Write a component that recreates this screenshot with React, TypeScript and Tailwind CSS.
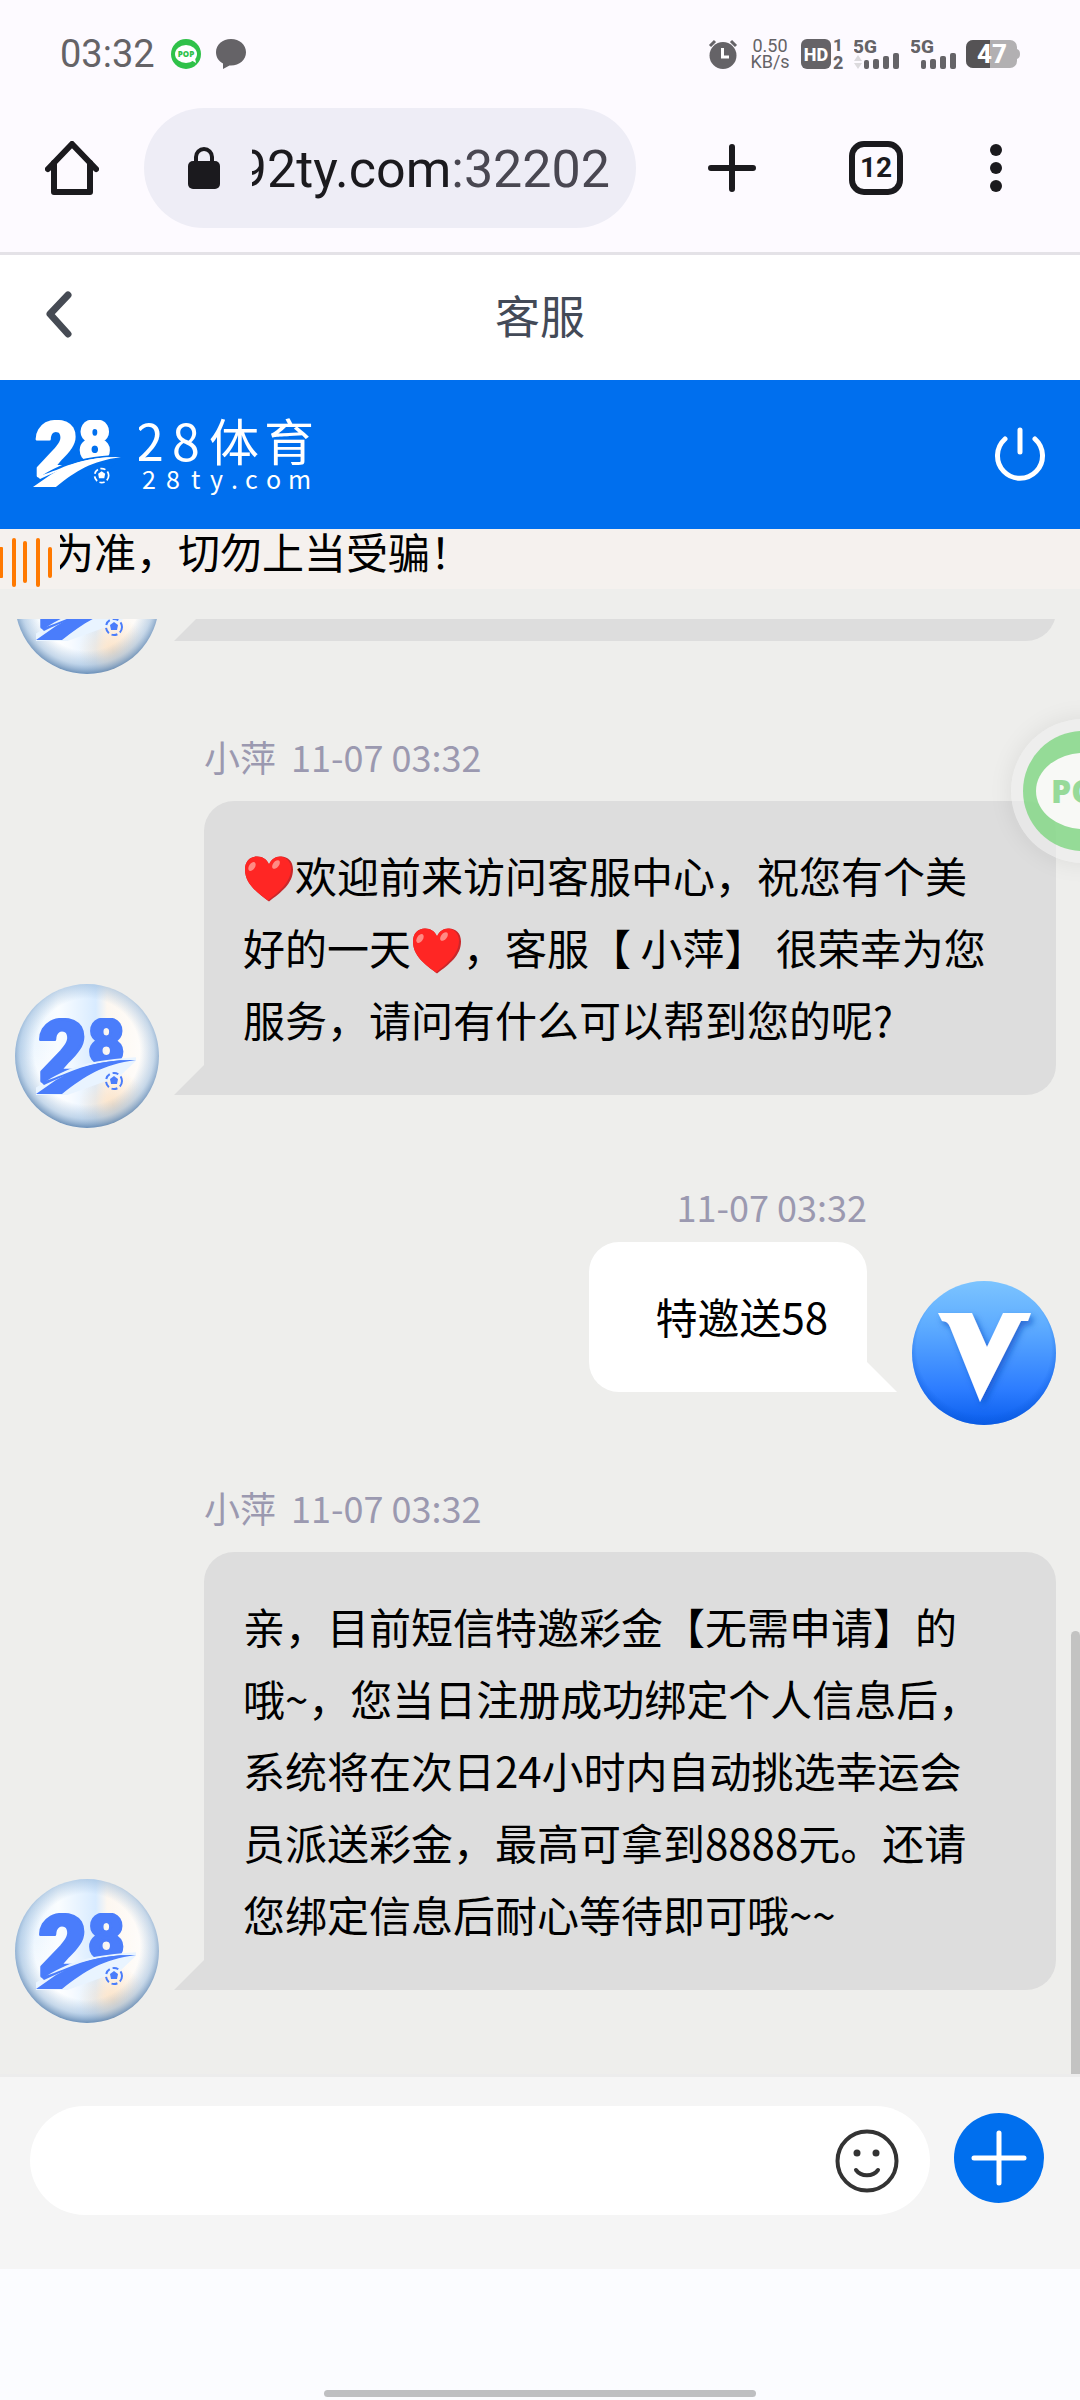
import React, { useId } from "react";

const CJK = "font-['Noto_Sans_CJK_SC',sans-serif]";

function PopIcon() {
  return (
    <svg className="size-[30px]" viewBox="0 0 30 30" aria-hidden="true">
      <circle cx="15" cy="15" r="15" fill="#2fc149" />
      <ellipse cx="15" cy="15" rx="11" ry="9" fill="#fff" />
      <path d="M20 21l5 3-1-5z" fill="#fff" />
      <text x="15" y="18" textAnchor="middle" fontSize="8" fontWeight="800" fontFamily="Open Sans, sans-serif" fill="#2fc149">
        POP
      </text>
    </svg>
  );
}

function Signal({ arrows = false }: { arrows?: boolean }) {
  return (
    <svg className="h-[30px] w-[45px]" viewBox="0 0 45 30" fill="#656367" aria-hidden="true">
      <text x="-1" y="14" fontSize="19" fontWeight="800" fontFamily="Roboto, sans-serif">
        5G
      </text>
      {arrows && (
        <g fill="#dcdadd">
          <path d="M0 22l4-6 4 6zM0 24l4 6 4-6z" />
        </g>
      )}
      <rect x="10" y="21" width="5" height="9" rx="2" />
      <rect x="19" y="20" width="6" height="10" rx="2" />
      <rect x="29" y="17" width="6" height="13" rx="2" />
      <rect x="39" y="14" width="6" height="16" rx="2" />
    </svg>
  );
}

function StatusBar() {
  return (
    <div className="flex h-[108px] items-center pr-[60px] pl-[60px] font-['Roboto',sans-serif] text-[#656367]">
      <span className="text-[38px] leading-10">03:32</span>
      <div className="ml-4 flex flex-1 gap-[15px]">
        <PopIcon />
        <svg className="size-[30px]" viewBox="0 0 30 30" fill="#656367" aria-hidden="true">
          <path d="M15 0C6.500 0 0 5.800 0 13.200c0 5 2.800 9 7 11.300V30l6.500-3.500H15c8.500 0 15-5.800 15-13.200S23.500 0 15 0z" />
        </svg>
      </div>
      <svg className="size-[30px]" viewBox="0 0 30 30" aria-hidden="true">
        <circle cx="15" cy="16.500" r="13.500" fill="#656367" />
        <path d="M2 7l5-5M28 7l-5-5" stroke="#656367" strokeWidth="3" />
        <path d="M14.500 9v9H21" stroke="#fff" strokeWidth="3" fill="none" />
      </svg>
      <div className="ml-3 w-10 text-center text-[18px] leading-4">
        0.50
        <br />
        KB/s
      </div>
      <svg className="ml-[11px] h-[30px] w-[43px]" viewBox="0 0 43 30" fill="#656367" aria-hidden="true">
        <rect width="30" height="30" rx="6" />
        <text x="15" y="22" textAnchor="middle" fontSize="18" fontWeight="800" fill="#fff" fontFamily="Roboto, sans-serif">
          HD
        </text>
        <text x="32" y="12" fontSize="17" fontWeight="800" fontFamily="Roboto, sans-serif">
          1
        </text>
        <text x="32" y="30" fontSize="18" fontWeight="800" fontFamily="Roboto, sans-serif">
          2
        </text>
      </svg>
      <div className="ml-[10px] flex gap-3">
        <Signal arrows />
        <Signal />
      </div>
      <svg className="ml-[10px] h-7 w-[54px]" viewBox="0 0 54 28" aria-hidden="true">
        <rect width="51" height="28" rx="7" fill="#b2b0b2" />
        <path d="M51 9c4 1 4 9 0 10z" fill="#b2b0b2" />
        <path d="M7 0h17v28H7a7 7 0 0 1-7-7V7a7 7 0 0 1 7-7z" fill="#555355" />
        <text x="26" y="23" textAnchor="middle" fontSize="26" fontWeight="800" fill="#fff" fontFamily="Roboto, sans-serif">
          47
        </text>
      </svg>
    </div>
  );
}

function BrowserBar() {
  return (
    <div className="flex h-36 items-start border-b-[3px] border-[#e4e2e7] pr-9 pl-[45px] font-['Roboto',sans-serif] text-[#1b1a1e] box-content">
      <button type="button" aria-label="主页" className="flex h-[120px] w-[54px] items-center">
        <svg className="size-[54px]" viewBox="0 0 54 54" fill="none" stroke="#1b1a1e" strokeWidth="6" strokeLinecap="round" strokeLinejoin="round" aria-hidden="true">
          <path d="M3 28L27 3l24 25" />
          <path d="M9 22v29h36V22" />
        </svg>
      </button>
      <div className="ml-[45px] flex h-[120px] min-w-0 flex-1 items-center rounded-full bg-[#eeedf6] pr-[26px] pl-11">
        <svg className="h-[42px] w-8 shrink-0" viewBox="0 0 32 42" aria-hidden="true">
          <rect y="14" width="32" height="28" rx="5" fill="#1b1a1e" />
          <path d="M8 16v-6a8 8 0 0 1 16 0v6" fill="none" stroke="#1b1a1e" strokeWidth="4" />
        </svg>
        <div className="ml-8 flex min-w-0 flex-1 justify-end overflow-hidden pt-1 text-[52px] leading-[64px] whitespace-nowrap">
          <span>92ty.com</span>
          <span className="text-[#494751]">:32202</span>
        </div>
      </div>
      <button type="button" aria-label="新标签页" className="ml-6 flex h-[120px] w-36 items-center justify-center">
        <svg className="size-12" viewBox="0 0 48 48" stroke="#1b1a1e" strokeWidth="6" strokeLinecap="round" aria-hidden="true">
          <path d="M24 3v42M3 24h42" />
        </svg>
      </button>
      <button type="button" aria-label="切换标签页" className="flex h-[120px] w-36 items-center justify-center">
        <span className="flex size-[54px] items-center justify-center rounded-[15px] border-[6px] border-[#1b1a1e] text-[28px] leading-none font-bold">12</span>
      </button>
      <button type="button" aria-label="更多" className="flex h-[120px] w-24 flex-col items-center justify-center gap-[6px]">
        <span className="size-3 rounded-full bg-[#1b1a1e]" />
        <span className="size-3 rounded-full bg-[#1b1a1e]" />
        <span className="size-3 rounded-full bg-[#1b1a1e]" />
      </button>
    </div>
  );
}

function Mark({ className, gap }: { className: string; gap: string }) {
  return (
    <svg className={className} viewBox="0 0 100 77" fill="currentColor" aria-hidden="true">
      <g stroke="currentColor" strokeWidth="3" strokeLinejoin="round" fontWeight="900" fontFamily="Roboto, sans-serif">
        <text x="2" y="63" fontSize="86">
          2
        </text>
        <text x="52" y="46" fontSize="63">
          8
        </text>
      </g>
      <path d="M-4 72C20 58 34 42 104 39L84 58 26 79H-4z" fill={gap} />
      <path d="M5 64C30 58 44 44 92 42 60 46 30 56 8 67z" />
      <path d="M0 76L20 62C42 49 68 41 100 42 66 47 50 57 26 76z" />
      <circle cx="78" cy="63" r="8" fill="none" stroke="currentColor" strokeWidth="2" strokeDasharray="6 3" />
      <path d="M78 58l4 3-1 5h-6l-1-5z" />
    </svg>
  );
}

function AgentAvatar() {
  const id = useId();
  return (
    <div className="relative size-36 shrink-0">
      <svg className="size-36" viewBox="0 0 144 144" role="img" aria-label="客服头像">
        <defs>
          <linearGradient id={id + "b"} x1="0" x2="1">
            <stop offset="0" stopColor="#e3f1fe" />
            <stop offset=".3" stopColor="#fafdff" />
            <stop offset=".56" stopColor="#d8ebff" />
            <stop offset=".64" stopColor="#fdf7f0" />
            <stop offset="1" stopColor="#fff" />
          </linearGradient>
          <radialGradient id={id + "p"} cx=".68" cy=".84" r=".24">
            <stop offset="0" stopColor="#fbe3c8" />
            <stop offset="1" stopColor="#fbe3c8" stopOpacity="0" />
          </radialGradient>
          <radialGradient id={id + "w"} cx=".2" cy=".82" r=".4">
            <stop offset="0" stopColor="#fff" />
            <stop offset="1" stopColor="#fff" stopOpacity="0" />
          </radialGradient>
          <radialGradient id={id + "e"} cx=".5" cy=".47" r=".54">
            <stop offset=".68" stopColor="#8fb2d6" stopOpacity="0" />
            <stop offset=".86" stopColor="#8fb2d6" stopOpacity=".5" />
            <stop offset="1" stopColor="#557daa" stopOpacity=".95" />
          </radialGradient>
        </defs>
        <circle cx="72" cy="72" r="72" fill={`url(#${id}b)`} />
        <circle cx="72" cy="72" r="72" fill={`url(#${id}w)`} />
        <circle cx="72" cy="72" r="72" fill={`url(#${id}p)`} />
        <circle cx="72" cy="72" r="72" fill={`url(#${id}e)`} />
      </svg>
      <Mark className="absolute top-[34px] left-[21px] h-[77px] w-[100px] text-[#4a7dfb]" gap="#e9f4ff" />
    </div>
  );
}

function UserAvatar() {
  return (
    <svg className="size-36 shrink-0" viewBox="0 0 144 144" role="img" aria-label="我的头像">
      <defs>
        <linearGradient id="user-bg" x1="0" y1="0" x2="0" y2="1">
          <stop offset="0" stopColor="#7cc4ff" />
          <stop offset=".3" stopColor="#5fadff" />
          <stop offset=".75" stopColor="#2d7dff" />
          <stop offset="1" stopColor="#0a5eee" />
        </linearGradient>
        <radialGradient id="user-edge" cx=".5" cy=".46" r=".55">
          <stop offset=".85" stopColor="#0a58d8" stopOpacity="0" />
          <stop offset="1" stopColor="#0a58d8" stopOpacity=".6" />
        </radialGradient>
        <filter id="user-shadow" x="-20%" y="-20%" width="150%" height="150%">
          <feDropShadow dx="3" dy="4" stdDeviation="3" floodColor="#0b4fc4" floodOpacity=".7" />
        </filter>
      </defs>
      <circle cx="72" cy="72" r="72" fill="url(#user-bg)" />
      <circle cx="72" cy="72" r="72" fill="url(#user-edge)" />
      <path d="M26 32h34l15 34 16-34h28l-3 8h-7L68 121 38 46q-2-6-8-6z" fill="#fff" filter="url(#user-shadow)" />
    </svg>
  );
}

function Heart() {
  return (
    <svg className="mx-[2px] mt-[-6px] inline-block h-[46px] w-12 align-middle" viewBox="0 0 48 45" role="img" aria-label="红心">
      <path d="M24 45C12 36 0 27 0 13 0 5 5 0 12 0c6 0 10 3 12 8 2-5 6-8 12-8 7 0 12 5 12 13 0 14-12 23-24 32z" fill="#c8282b" />
      <path d="M23 44C11 35 0 27 0 13 0 5 5 0 12 0c6 0 10 3 12 8 2-5 6-8 11-8 6 0 11 5 11 12 0 14-12 23-23 32z" fill="#ff2624" />
      <ellipse cx="7" cy="10" rx="3" ry="5" fill="#ff8b84" transform="rotate(32 7 10)" />
      <ellipse cx="31" cy="8" rx="3" ry="5" fill="#ff8b84" transform="rotate(38 31 8)" />
    </svg>
  );
}

function AgentMessage({ time, children }: { time: string; children: React.ReactNode }) {
  return (
    <article className="mt-14 flex items-end pr-6 pl-[15px]">
      <AgentAvatar />
      <div className="ml-[45px] min-w-0 flex-1 pb-[33px]">
        <div className="mb-[19px] flex gap-[15px] text-[36px] leading-[52px] text-[#9b99b0]">
          <span>小萍</span>
          <time>{time}</time>
        </div>
        <AgentBubble>{children}</AgentBubble>
      </div>
    </article>
  );
}

function AgentBubble({ children }: { children?: React.ReactNode }) {
  return (
    <div className="relative rounded-[30px] rounded-bl-none bg-[#dddddd] pt-[38px] pr-[60px] pb-10 pl-[39px] text-[42px] leading-[72px] text-black">
      {children}
      <span className="absolute bottom-0 left-[-30px] size-[30px] bg-[#dddddd] [clip-path:polygon(100%_0,100%_100%,0_100%)]" />
    </div>
  );
}

export default function App() {
  return (
    <div className={`flex min-h-screen w-full flex-col overflow-hidden bg-[#fdfaff] ${CJK}`}>
      <StatusBar />
      <BrowserBar />

      <header className="flex h-[125px] items-center bg-white px-[45px] pb-[6px]">
        <button type="button" aria-label="返回" className="w-[27px]">
          <svg className="h-[48px] w-[27px]" viewBox="0 0 27 48" fill="none" stroke="#464b54" strokeWidth="7" strokeLinecap="round" strokeLinejoin="round" aria-hidden="true">
            <path d="M23 4L5 23l18 20" />
          </svg>
        </button>
        <h1 className="flex-1 text-center text-[45px] leading-[60px] text-[#434a57]">客服</h1>
        <span className="w-[27px]" />
      </header>

      <div className="flex h-[149px] items-center justify-between bg-[#006fee] pr-[33px] pb-[2px] pl-[33px] text-white">
        <div className="flex items-center gap-[18px]">
          <Mark className="h-[68px] w-[88px]" gap="#006fee" />
          <svg className="h-[84px] w-[180px]" viewBox="0 0 180 84" fill="#fff" role="img" aria-label="28体育 28ty.com">
            <text x="-3 33 70 125" y="49" fontSize="50" fontFamily="Noto Sans CJK SC, sans-serif">
              28体育
            </text>
            <text x="3 27 52 71 92 106 127 149" y="77" fontSize="25" fontFamily="Noto Sans CJK SC, sans-serif">
              28ty.com
            </text>
          </svg>
        </div>
        <button type="button" aria-label="结束会话" className="size-[54px]">
          <svg className="size-[54px]" viewBox="0 0 54 54" fill="none" stroke="#fff" strokeWidth="5" strokeLinecap="round" aria-hidden="true">
            <path d="M27 3v22M12 12a22.500 22.500 0 1 0 30 0" />
          </svg>
        </button>
      </div>

      <div className="flex h-[60px] items-start bg-[#f5f1ee]">
        <svg className="mt-2 h-[50px] w-[60px] shrink-0" viewBox="0 0 60 50" fill="#ff7900" aria-hidden="true">
          <rect x="-2" y="10" width="5" height="31" rx="1" />
          <rect x="12" y="1" width="4" height="49" rx="2" />
          <rect x="23" y="4" width="4" height="42" rx="2" />
          <rect x="36" y="1" width="4" height="49" rx="2" />
          <rect x="48" y="10" width="4" height="31" rx="2" />
        </svg>
        <div className="min-w-0 flex-1 overflow-hidden">
          <p className="-ml-2 text-[42px] leading-[44px] whitespace-nowrap text-black">为准，切勿上当受骗！</p>
        </div>
      </div>

      <main className="relative flex-1 bg-[#eeeeec] pt-[30px] pb-[51px]">
        <div className="flex h-[55px] items-end overflow-hidden pr-6 pl-[15px]">
          <AgentAvatar />
          <div className="ml-[45px] flex-1 pb-[33px]">
            <AgentBubble />
          </div>
        </div>

        <AgentMessage time="11-07 03:32">
          <Heart />
          欢迎前来访问客服中心，祝您有个美好的一天
          <Heart />
          ，客服【 小萍】 很荣幸为您服务，请问有什么可以帮到您的呢?
        </AgentMessage>

        <article className="mt-14 flex items-end justify-end pr-6">
          <div className="mr-[45px] flex flex-col items-end pb-[33px]">
            <time className="mb-[14px] text-[36px] leading-[44px] text-[#9b99b0]">11-07 03:32</time>
            <div className="relative rounded-[30px] rounded-br-none bg-white pt-[38px] pr-[39px] pb-10 pl-[66px] text-[42px] leading-[72px] text-black">
              特邀送58
              <span className="absolute right-[-30px] bottom-0 size-[30px] bg-white [clip-path:polygon(0_0,100%_100%,0_100%)]" />
            </div>
          </div>
          <UserAvatar />
        </article>

        <AgentMessage time="11-07 03:32">
          亲，目前短信特邀彩金【无需申请】的哦~，您当日注册成功绑定个人信息后，系统将在次日24小时内自动挑选幸运会员派送彩金，最高可拿到8888元。还请您绑定信息后耐心等待即可哦~~
        </AgentMessage>

        <span className="absolute right-0 bottom-0 h-[443px] w-[9px] rounded-t-full bg-[#c3c3c2]" />
        <button
          type="button"
          aria-label="POP"
          className="absolute top-[130px] right-[-75px] size-36 rounded-full bg-[#efefee]/60 shadow-[0_0_24px_rgba(0,0,0,0.08)]"
        >
          <svg className="size-36" viewBox="0 0 144 144" aria-hidden="true">
            <circle cx="72" cy="72" r="60" fill="#7ed681" fillOpacity=".8" />
            <ellipse cx="72" cy="72" rx="47" ry="38" fill="#f8f9f6" />
            <text x="40" y="84" fontSize="32" fontWeight="800" fontFamily="Open Sans, sans-serif" fill="#97da99">
              POP
            </text>
          </svg>
        </button>
      </main>

      <form className="flex items-start border-t-[3px] border-[#ececec] bg-[#f5f5f5] pt-[29px] pr-9 pb-[54px] pl-[30px]" onSubmit={(e) => e.preventDefault()}>
        <div className="flex h-[109px] min-w-0 flex-1 items-center rounded-full bg-white pr-[31px] pl-10">
          <input type="text" aria-label="输入消息" className="h-full min-w-0 flex-1 bg-transparent text-[42px] outline-none" />
          <button type="button" aria-label="表情" className="size-16">
            <svg className="size-16" viewBox="0 0 64 64" fill="none" stroke="#333" strokeWidth="4" strokeLinecap="round" aria-hidden="true">
              <circle cx="32" cy="32" r="29.500" />
              <path d="M21 41c5 7 17 7 22 0" />
              <circle cx="22" cy="24" r="3.500" fill="#333" stroke="none" />
              <circle cx="41" cy="24" r="3.500" fill="#333" stroke="none" />
            </svg>
          </button>
        </div>
        <button type="button" aria-label="添加" className="mt-[7px] ml-6 size-[90px] rounded-full bg-[#006fee]">
          <svg className="size-[90px]" viewBox="0 0 90 90" stroke="#fff" strokeWidth="5" strokeLinecap="round" aria-hidden="true">
            <path d="M45 20v50M20 45h50" />
          </svg>
        </button>
      </form>

      <div className="flex h-[131px] items-end justify-center bg-[#fbfcff] pb-[3px]">
        <span className="h-[7px] w-2/5 rounded-full bg-[#bebfc1]" />
      </div>
    </div>
  );
}
